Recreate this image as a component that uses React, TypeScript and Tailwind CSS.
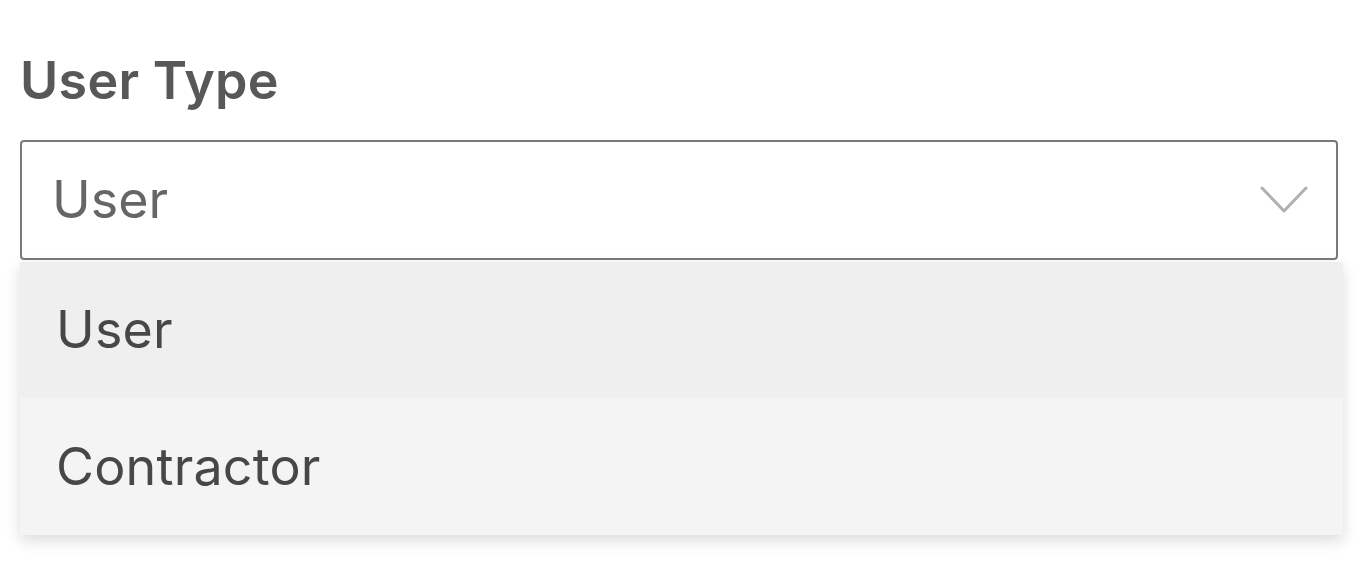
import { useState } from "react";

const options = ["User", "Contractor"];

export default function App() {
  const [selected] = useState("User");

  return (
    <div className="min-h-[575px] bg-white pl-5 pt-[55px] font-['Inter',sans-serif]">
      <label className="block text-[52px] font-semibold leading-[52px] tracking-[0.3px] text-[#585858]">
        User Type
      </label>

      <div className="mt-[33px] w-[1318px]">
        {/* Select box */}
        <div className="flex h-[120px] items-center justify-between rounded-[4px] border-2 border-[#7a7a7a] bg-white pl-[30px] pr-[28px]">
          <span className="text-[52px] leading-none text-[#666666]">{selected}</span>
          <svg width="48" height="30" viewBox="0 0 48 30" fill="none">
            <path
              d="M2 3 L24 26 L46 3"
              stroke="#b0b0b0"
              strokeWidth="3"
              strokeLinecap="round"
              strokeLinejoin="round"
            />
          </svg>
        </div>

        {/* Options */}
        <div className="mt-[2px] w-[1323px] shadow-[0_6px_14px_rgba(0,0,0,0.14)]">
          {options.map((opt, i) => (
            <div
              key={opt}
              className={
                i === 0
                  ? "flex h-[136px] items-center bg-[#efefef] pl-[36px] text-[52px] leading-none tracking-[0.2px] text-[#474747]"
                  : "flex h-[137px] items-center bg-[#f4f4f4] pl-[36px] text-[52px] leading-none tracking-[0.2px] text-[#474747]"
              }
            >
              {opt}
            </div>
          ))}
        </div>
      </div>
    </div>
  );
}
